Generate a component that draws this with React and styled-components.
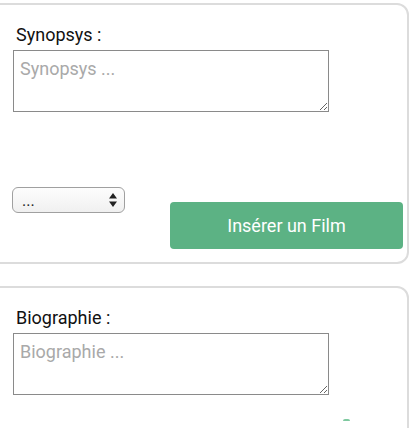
import React from 'react'
import styled, {createGlobalStyle} from 'styled-components'

const GlobalStyle = createGlobalStyle`
	html, body {
		margin: 0;
		padding: 0;
		background: #fff;
	}
	body {
		font-family: Roboto, "Liberation Sans", Arial, sans-serif;
		color: #111;
		overflow: hidden;
	}
`

const Page = styled.div`
	width: 411px;
	height: 428px;
	overflow: hidden;
	padding-top: 3px;
	box-sizing: border-box;
`

const Card = styled.section`
	box-sizing: border-box;
	margin: 0 2px ${p => p.$gap || 0}px -20px;
	padding: 19px 0 0 32px;
	height: ${p => p.$height}px;
	border: 2px solid #dcdcdc;
	border-radius: 12px;
	background: #fff;
`

const Label = styled.label`
	display: block;
	font-size: 18px;
	line-height: 21px;
	margin: 0 0 5px 2px;
	color: #111;
`

const Area = styled.textarea`
	display: block;
	box-sizing: border-box;
	width: 316px;
	height: 62px;
	margin: 0 0 0 -1px;
	padding: 7px 6px;
	border: 1px solid #8a8a8a;
	border-radius: 0;
	font-family: Roboto, "Liberation Sans", Arial, sans-serif;
	font-size: 18px;
	line-height: 22px;
	color: #222;
	resize: both;
	&::placeholder {
		color: #a9a9a9;
	}
`

const Actions = styled.div`
	display: flex;
	align-items: flex-start;
	justify-content: space-between;
	margin-top: 75px;
	padding-right: 4px;
`

const SelectWrap = styled.div`
	position: relative;
	width: 113px;
	height: 26px;
	margin-left: -2px;
`

const Select = styled.select`
	appearance: none;
	-webkit-appearance: none;
	box-sizing: border-box;
	width: 100%;
	height: 100%;
	padding: 0 24px 0 9px;
	border: 1px solid #a0a0a0;
	border-radius: 6px;
	background: linear-gradient(#fdfdfd, #f0f0f0);
	font-family: Roboto, "Liberation Sans", Arial, sans-serif;
	font-size: 16px;
	color: #222;
`

const Arrows = styled.svg`
	position: absolute;
	right: 8px;
	top: 6px;
	pointer-events: none;
`

const Button = styled.button`
	box-sizing: border-box;
	width: 233px;
	height: 47px;
	margin-top: 15px;
	border: none;
	border-radius: 4px;
	background: #5cb284;
	color: #fff;
	font-family: Roboto, "Liberation Sans", Arial, sans-serif;
	font-size: 18px;
	cursor: pointer;
`

const Footer = styled.div`
	display: flex;
	justify-content: flex-end;
	padding-right: 57px;
	margin-top: 24px;
`

const Mark = styled.span`
	display: block;
	width: 7px;
	height: 2px;
	border-radius: 2px 2px 0 0;
	background: #7fc9a0;
`

const App = () => (
	<Page>
		<GlobalStyle />
		<Card $height={261} $gap={22}>
			<Label htmlFor="synopsys">Synopsys :</Label>
			<Area id="synopsys" placeholder="Synopsys ..." />
			<Actions>
				<SelectWrap>
					<Select defaultValue="">
						<option value="">...</option>
					</Select>
					<Arrows width="8" height="14" viewBox="0 0 8 14">
						<path d="M4 0 L8 5.5 L0 5.5 Z M4 14 L8 8.5 L0 8.5 Z" fill="#222" />
					</Arrows>
				</SelectWrap>
				<Button>Insérer un Film</Button>
			</Actions>
		</Card>
		<Card $height={200}>
			<Label htmlFor="bio">Biographie :</Label>
			<Area id="bio" placeholder="Biographie ..." />
			<Footer>
				<Mark />
			</Footer>
		</Card>
	</Page>
)

export default App
